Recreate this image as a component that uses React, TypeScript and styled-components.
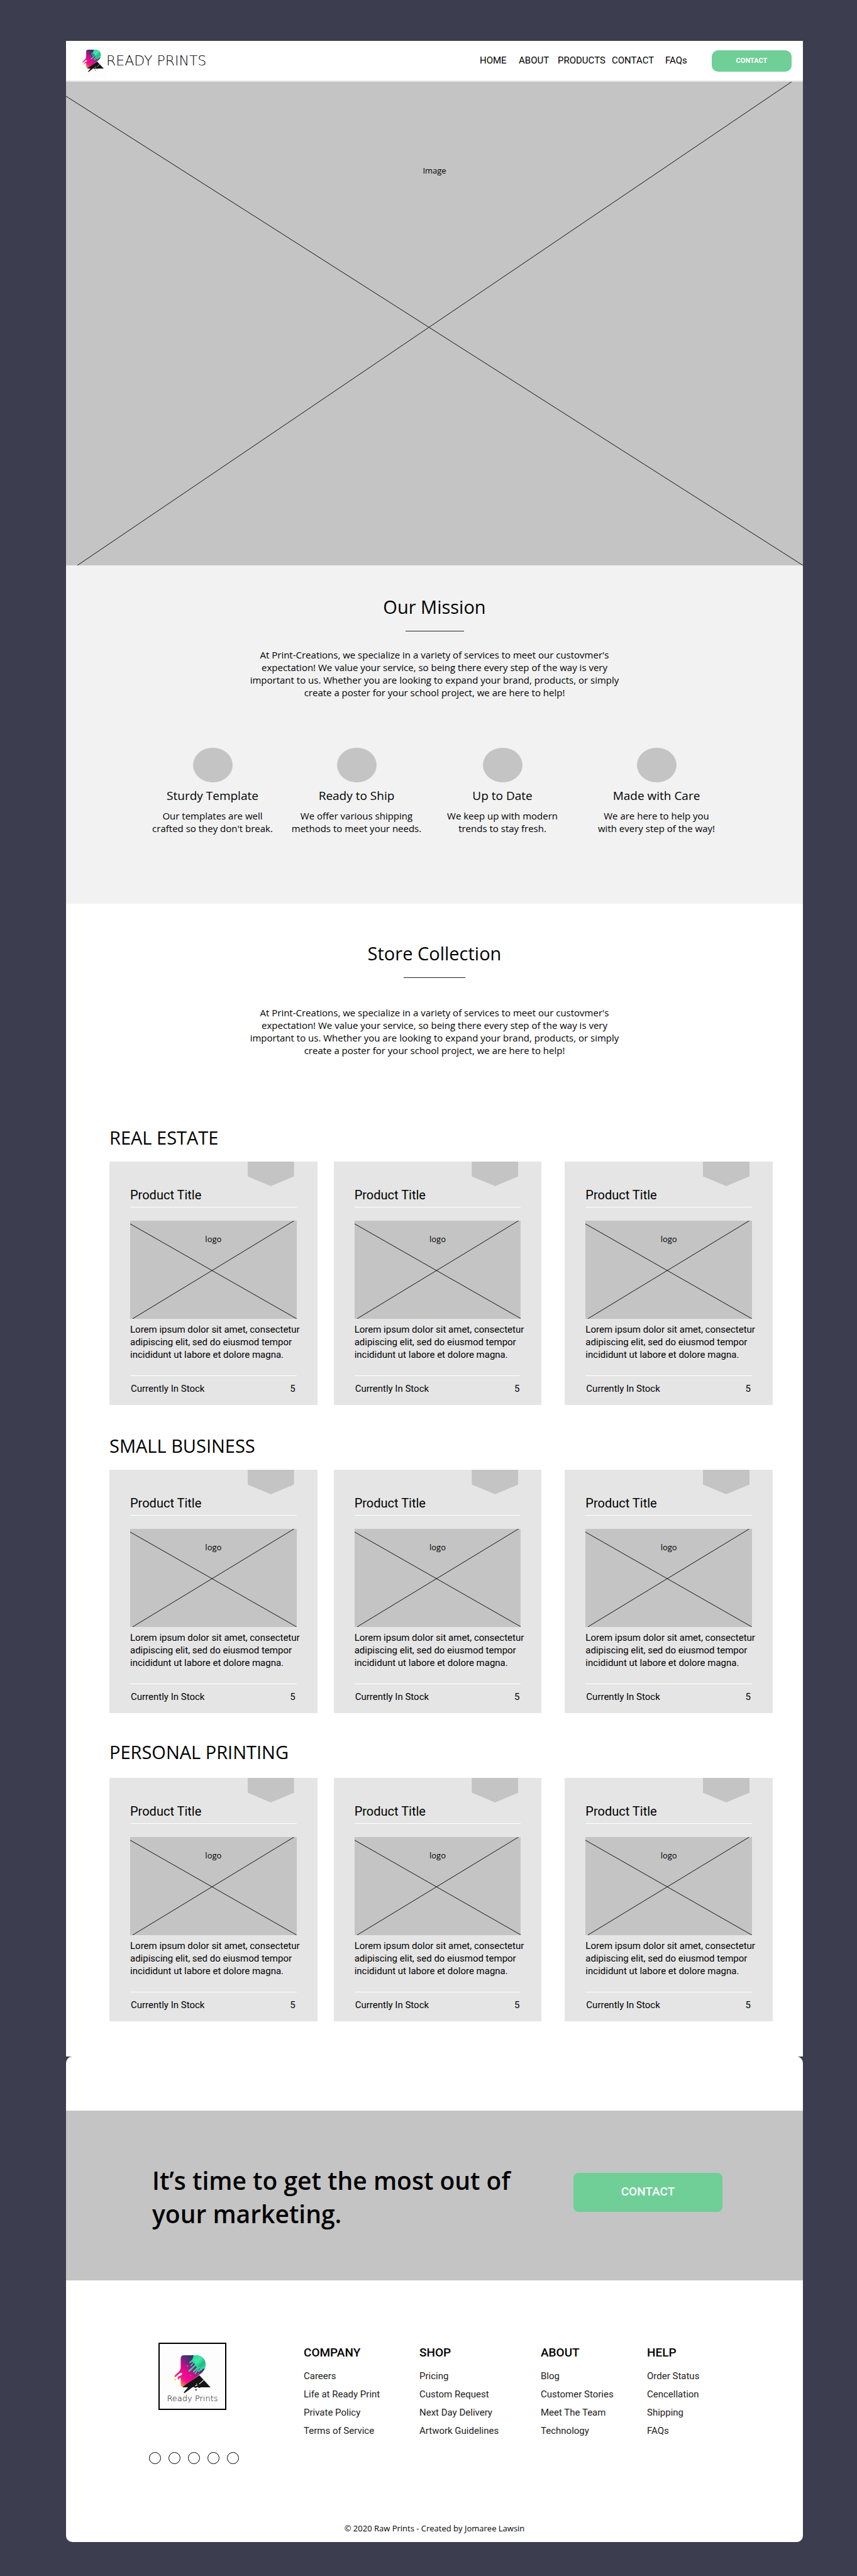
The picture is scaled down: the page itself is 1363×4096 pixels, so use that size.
import React from "react";
import styled, { createGlobalStyle } from "styled-components";

const color = {
  backdrop: "#3c3e4f",
  paper: "#ffffff",
  mist: "#f2f2f2",
  card: "#e5e5e5",
  placeholder: "#c4c4c4",
  ink: "#000000",
  green: "#6fcf97",
};

const openSans = `"Open Sans", "Noto Sans", sans-serif`;
const roboto = `Roboto, "Liberation Sans", sans-serif`;
const wide = `"DejaVu Sans", Verdana, sans-serif`;

const GlobalStyle = createGlobalStyle`
  * { box-sizing: border-box; }
  body { margin: 0; background: ${color.backdrop}; color: ${color.ink}; font-family: ${openSans}; }
  h1, h2, h3, p, ul { margin: 0; padding: 0; font-weight: 400; }
  ul { list-style: none; }
  a { color: inherit; text-decoration: none; }
`;

const Shell = styled.div`
  padding: 65px 86px 54px 105px;
`;

const Page = styled.div`
  background: ${color.paper};
`;

/* ---------- Header ---------- */

const Header = styled.header`
  display: flex;
  align-items: center;
  height: 65px;
  padding: 0 18px 0 24px;
  border-bottom: 2px solid ${color.card};
`;

const Brand = styled.a`
  display: flex;
  align-items: center;
  margin-right: auto;
  font-family: ${wide};
  font-weight: 200;
  font-size: 22px;
  line-height: 24px;
  white-space: nowrap;
`;

const MarkPlate = styled.span`
  display: flex;
  align-items: center;
  width: 40px;
  height: 55px;
  padding-left: 2px;
  background: #fdfdfd;
`;

const Nav = styled.nav`
  display: grid;
  grid-template-columns: 62px 62px 86px 85px 36px;
  margin-right: 38px;
  padding-bottom: 2px;
  font-family: ${roboto};
  font-size: 15px;
  line-height: 20px;
`;

const Button = styled.button<{ $large?: boolean }>`
  flex: none;
  width: ${(p) => (p.$large ? 237 : 127)}px;
  height: ${(p) => (p.$large ? 62 : 34)}px;
  padding: 0 0 ${(p) => (p.$large ? 4 : 1)}px;
  border: 0;
  border-radius: ${(p) => (p.$large ? 8 : 10)}px;
  background: ${color.green};
  color: #fff;
  font-family: ${roboto};
  font-weight: ${(p) => (p.$large ? 500 : 700)};
  font-size: ${(p) => (p.$large ? 19 : 11)}px;
`;

/* ---------- Crossed placeholder ---------- */

const Placeholder = styled.div<{ $ratio: string; $labelTop: number }>`
  position: relative;
  aspect-ratio: ${(p) => p.$ratio};
  padding-top: ${(p) => p.$labelTop}px;
  background: ${color.placeholder};
  text-align: center;
  font-size: 13px;
  line-height: 18px;
`;

const Cross = styled.svg`
  position: absolute;
  inset: 0;
  width: 100%;
  height: 100%;
  stroke: #111;
  stroke-width: 1;
`;

/* ---------- Intro sections ---------- */

const Mission = styled.section`
  padding: 46px 0 110px;
  background: ${color.mist};
`;

const Store = styled.section`
  padding: 59px 0 56px;
`;

const SectionTitle = styled.h2`
  font-size: 29px;
  line-height: 40px;
  text-align: center;
`;

const Rule = styled.hr<{ $width: number }>`
  width: ${(p) => p.$width}px;
  height: 1px;
  margin: 18px auto 0;
  border: 0;
  background: #222;
`;

const Lead = styled.p<{ $top: number }>`
  margin-top: ${(p) => p.$top}px;
  font-size: 15px;
  line-height: 20px;
  text-align: center;
`;

const Features = styled.div`
  display: grid;
  grid-template-columns: 230fr 228fr 236fr 254fr;
  margin-top: 78px;
  padding: 0 106px 0 118px;
  text-align: center;
`;

const Oval = styled.div`
  width: 63px;
  height: 55px;
  margin: 0 auto 7px;
  border-radius: 50%;
  background: ${color.placeholder};
`;

const FeatureTitle = styled.h3`
  font-size: 19px;
  line-height: 28px;
`;

const FeatureText = styled.p`
  margin-top: 8px;
  font-size: 15px;
  line-height: 20px;
`;

/* ---------- Store groups ---------- */

const Groups = styled.div`
  padding: 64px 48px 0 69px;
`;

const GroupTitle = styled.h2<{ $below: number }>`
  padding-top: ${(p) => 63 - p.$below}px;
  padding-bottom: ${(p) => p.$below}px;
  font-size: 29px;
  line-height: 40px;
`;

const CardRow = styled.div`
  display: flex;
  gap: 26px;
`;

const Card = styled.article`
  position: relative;
  flex: 1;
  min-width: 0;
  height: 387px;
  padding: 40px 33px 0;
  background: ${color.card};
  font-family: ${roboto};

  &:last-child {
    margin-left: 11px;
  }
`;

const Tag = styled.div`
  position: absolute;
  top: 0;
  right: 37px;
  width: 74px;
  height: 39px;
  background: ${color.placeholder};
  clip-path: polygon(0 0, 100% 0, 100% 60%, 50% 100%, 0 60%);
`;

const CardTitle = styled.h3`
  height: 33px;
  margin-bottom: 21px;
  border-bottom: 1px solid #fff;
  font-size: 20px;
  line-height: 26px;
`;

const CardImage = styled(Placeholder)`
  font-family: ${openSans};
`;

const CardText = styled.p`
  margin-top: 7px;
  padding-bottom: 23px;
  font-size: 15px;
  line-height: 20px;
  white-space: nowrap;
`;

const Stock = styled.div`
  display: flex;
  justify-content: space-between;
  padding: 10px 2px 0 1px;
  border-top: 1px solid #fff;
  font-size: 15px;
  line-height: 20px;
`;

/* ---------- Closing block ---------- */

const Closing = styled.div`
  padding-top: 86px;
  border-radius: 10px;
  background: ${color.paper};
`;

const Banner = styled.section`
  display: flex;
  align-items: flex-start;
  justify-content: space-between;
  padding: 84px 128px 80px 137px;
  background: ${color.placeholder};

  ${Button} {
    margin-top: 15px;
  }
`;

const BannerTitle = styled.h2`
  max-width: 620px;
  font-weight: 600;
  font-size: 39px;
  line-height: 53px;
`;

const FooterGrid = styled.div`
  display: grid;
  grid-template-columns: 246fr 184fr 193fr 169fr 248fr;
  padding: 99px 0 0 132px;
`;

const LogoBox = styled.div`
  display: flex;
  flex-direction: column;
  align-items: center;
  width: 108px;
  height: 107px;
  margin-left: 15px;
  padding-top: 18px;
  border: 2px solid #000;
  background: #fdfdfd;
  font-family: ${wide};
  font-weight: 200;
  font-size: 13px;
  line-height: 16px;
`;

const Socials = styled.ul`
  display: flex;
  gap: 12px;
  margin-top: 67px;

  a {
    display: block;
    width: 19px;
    height: 19px;
    border: 1px solid #000;
    border-radius: 50%;
  }
`;

const LinkColumn = styled.div`
  padding-top: 4px;
  font-family: ${roboto};
  font-weight: 300;
  font-size: 15px;
  line-height: 29px;
`;

const LinkHeading = styled.h3`
  margin-bottom: 11px;
  font-weight: 500;
  font-size: 19px;
  line-height: 24px;
`;

const LinkList = styled.ul`
  color: #222;
`;

const Copyright = styled.p`
  padding: 93px 0 13px;
  font-size: 13px;
  line-height: 18px;
  text-align: center;
`;

/* ---------- Drawings ---------- */

function Mark({ id, width, height }: { id: string; width: number; height: number }) {
  return (
    <svg width={width} height={height} viewBox="0 0 71 75" aria-hidden="true">
      <defs>
        <linearGradient id={`${id}-body`} gradientUnits="userSpaceOnUse" x1="8" y1="58" x2="48" y2="12">
          <stop offset="0" stopColor="#fdb022" />
          <stop offset="0.24" stopColor="#f5138a" />
          <stop offset="0.5" stopColor="#e6058c" />
          <stop offset="0.8" stopColor="#5b2a78" />
          <stop offset="1" stopColor="#26346c" />
        </linearGradient>
        <linearGradient id={`${id}-green`} x1="0" y1="0" x2="1" y2="1">
          <stop offset="0" stopColor="#2fd39a" />
          <stop offset="0.45" stopColor="#3eeba5" />
          <stop offset="0.7" stopColor="#21b886" />
          <stop offset="1" stopColor="#3ee8a6" />
        </linearGradient>
      </defs>
      <path
        d="M19 0H42C54 0 61 8 61 18C61 28 56 33 49 38L18 62Q12.600 62 12.600 55V44Q11 44 9 47Q6 49 6.500 44Q7 41 12 40Q16 38 15.500 35.500Q13 33 9 37Q5 40 2.500 43Q0 43 .7 40Q2 38 7 34Q12.600 30 12.600 23V7Q12.600 0 19 0Z"
        fill={`url(#${id}-body)`}
      />
      <circle cx="2" cy="48" r="1.800" fill="#ffd21f" />
      <path
        d="M38 0H42C54 0 61 8 61 17Q61 22 59.500 26L52 27L44 24L39 15L34 12Q36 7 38 0Z"
        fill={`url(#${id}-green)`}
      />
      <g stroke="#33dca0" strokeLinecap="round" fill="none">
        <path strokeWidth="3" d="M37 9L31 14M42 19L29 31M46 24L38 32M54 26L48 31" />
        <path strokeWidth="2.200" d="M40 12L33 20M49 24L41 36M55 25L53 29" />
      </g>
      <g fill="#33dca0">
        <circle cx="26" cy="21" r="1.200" />
        <circle cx="32" cy="40" r="1" />
        <circle cx="48" cy="36" r="1" />
      </g>
      <path d="M49 39L71 62.700H52L49 64L46 62L41 64Q38 61 35 63L20 74Q18.500 74 19 72L27 62.700H16L19 60Z" fill="#151515" />
      <circle cx="42.500" cy="67.500" r="1.500" fill="#151515" />
      <path d="M57 49L49 56M45 58L41 60" stroke="#fff" strokeWidth="1.300" strokeLinecap="round" />
      <circle cx="43.500" cy="56" r=".8" fill="#fff" />
    </svg>
  );
}

function HeroCross() {
  return (
    <Cross viewBox="0 0 1172 769" preserveAspectRatio="none" aria-hidden="true">
      <path d="M0 23L1172 769M1154 0L18 769" />
    </Cross>
  );
}

function CardCross() {
  return (
    <Cross viewBox="0 0 265 156" preserveAspectRatio="none" aria-hidden="true">
      <path d="M0 5L265 156M261 0L4 156" />
    </Cross>
  );
}

/* ---------- Content ---------- */

const navItems = ["HOME", "ABOUT", "PRODUCTS", "CONTACT", "FAQs"];

const features = [
  { title: "Sturdy Template", lines: ["Our templates are well", "crafted so they don't break."] },
  { title: "Ready to Ship", lines: ["We offer various shipping", "methods to meet your needs."] },
  { title: "Up to Date", lines: ["We keep up with modern", "trends to stay fresh."] },
  { title: "Made with Care", lines: ["We are here to help you", "with every step of the way!"] },
];

const groups = [
  { title: "REAL ESTATE", below: 18 },
  { title: "SMALL BUSINESS", below: 18 },
  { title: "PERSONAL PRINTING", below: 21 },
];

const footerLinks = [
  { title: "COMPANY", links: ["Careers", "Life at Ready Print", "Private Policy", "Terms of Service"] },
  { title: "SHOP", links: ["Pricing", "Custom Request", "Next Day Delivery", "Artwork Guidelines"] },
  { title: "ABOUT", links: ["Blog", "Customer Stories", "Meet The Team", "Technology"] },
  { title: "HELP", links: ["Order Status", "Cencellation", "Shipping", "FAQs"] },
];

const socials = ["Facebook", "Twitter", "Instagram", "LinkedIn", "YouTube"];

function Pitch({ top }: { top: number }) {
  return (
    <Lead $top={top}>
      At Print-Creations, we specialize in a variety of services to meet our custovmer's
      <br />
      expectation! We value your service, so being there every step of the way is very
      <br />
      important to us. Whether you are looking to expand your brand, products, or simply
      <br />
      create a poster for your school project, we are here to help!
    </Lead>
  );
}

function ProductCard() {
  return (
    <Card>
      <Tag />
      <CardTitle>Product Title</CardTitle>
      <CardImage $ratio="265 / 156" $labelTop={20}>
        <CardCross />
        logo
      </CardImage>
      <CardText>
        Lorem ipsum dolor sit amet, consectetur
        <br />
        adipiscing elit, sed do eiusmod tempor
        <br />
        incididunt ut labore et dolore magna.
      </CardText>
      <Stock>
        <span>Currently In Stock</span>
        <span>5</span>
      </Stock>
    </Card>
  );
}

export default function App() {
  return (
    <>
      <GlobalStyle />
      <Shell>
        <Page>
          <Header>
            <Brand href="#">
              <MarkPlate>
                <Mark id="top" width={34} height={36} />
              </MarkPlate>
              READY PRINTS
            </Brand>
            <Nav>
              {navItems.map((item) => (
                <a key={item} href="#">
                  {item}
                </a>
              ))}
            </Nav>
            <Button type="button">CONTACT</Button>
          </Header>

          <Placeholder $ratio="1172 / 769" $labelTop={132}>
            <HeroCross />
            Image
          </Placeholder>

          <Mission>
            <SectionTitle>Our Mission</SectionTitle>
            <Rule $width={93} />
            <Pitch top={27} />
            <Features>
              {features.map((f) => (
                <div key={f.title}>
                  <Oval />
                  <FeatureTitle>{f.title}</FeatureTitle>
                  <FeatureText>
                    {f.lines[0]}
                    <br />
                    {f.lines[1]}
                  </FeatureText>
                </div>
              ))}
            </Features>
          </Mission>

          <Store>
            <SectionTitle>Store Collection</SectionTitle>
            <Rule $width={98} />
            <Pitch top={45} />
            <Groups>
              {groups.map((g) => (
                <section key={g.title}>
                  <GroupTitle $below={g.below}>{g.title}</GroupTitle>
                  <CardRow>
                    <ProductCard />
                    <ProductCard />
                    <ProductCard />
                  </CardRow>
                </section>
              ))}
            </Groups>
          </Store>
        </Page>

        <Closing>
          <Banner>
            <BannerTitle>It’s time to get the most out of your marketing.</BannerTitle>
            <Button type="button" $large>
              CONTACT
            </Button>
          </Banner>
          <footer>
            <FooterGrid>
              <div>
                <LogoBox>
                  <Mark id="bottom" width={58} height={61} />
                  Ready Prints
                </LogoBox>
                <Socials>
                  {socials.map((s) => (
                    <li key={s}>
                      <a href="#" aria-label={s} />
                    </li>
                  ))}
                </Socials>
              </div>
              {footerLinks.map((col) => (
                <LinkColumn key={col.title}>
                  <LinkHeading>{col.title}</LinkHeading>
                  <LinkList>
                    {col.links.map((l) => (
                      <li key={l}>
                        <a href="#">{l}</a>
                      </li>
                    ))}
                  </LinkList>
                </LinkColumn>
              ))}
            </FooterGrid>
            <Copyright>© 2020 Raw Prints - Created by Jomaree Lawsin</Copyright>
          </footer>
        </Closing>
      </Shell>
    </>
  );
}
